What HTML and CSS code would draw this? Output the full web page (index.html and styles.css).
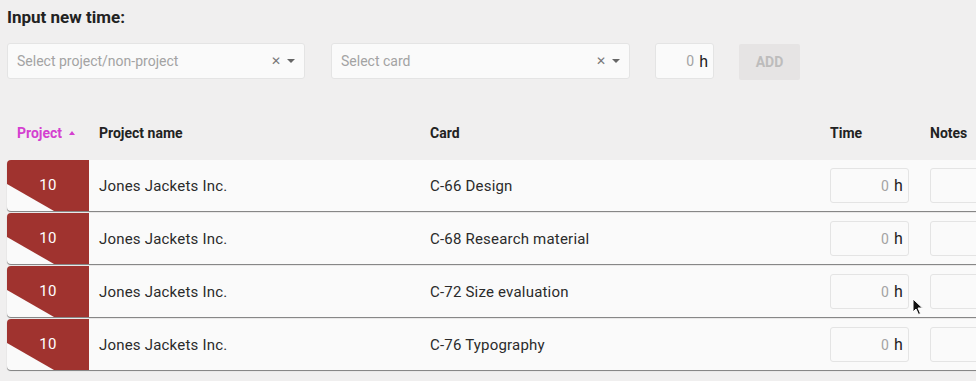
FILE: index.html
```html
<!DOCTYPE html>
<html lang="en">

<head>
  <meta charset="UTF-8">
  <title>Input new time</title>
  <link rel="stylesheet" href="styles.css">
</head>

<body>
  <div id="page">
    <h1>Input new time:</h1>

    <form class="new-time">
      <div class="select first">
        <span class="placeholder">Select project/non-project</span>
        <span class="clear">&#x2715;</span>
        <span class="caret"></span>
      </div>
      <div class="select second">
        <span class="placeholder">Select card</span>
        <span class="clear">&#x2715;</span>
        <span class="caret"></span>
      </div>
      <div class="hours">
        <span class="num">0</span><span class="unit">h</span>
      </div>
      <button type="button" disabled>ADD</button>
    </form>

    <div class="table">
      <div class="head">
        <div class="sorted">Project <span class="sort-up"></span></div>
        <div>Project name</div>
        <div>Card</div>
        <div>Time</div>
        <div>Notes</div>
      </div>

      <div class="row">
        <div class="badge">10</div>
        <div class="name">Jones Jackets Inc.</div>
        <div class="card">C-66 Design</div>
        <div class="time"><div class="hours small"><span class="num">0</span><span class="unit">h</span></div></div>
        <div class="notes"><div class="note-box"></div></div>
      </div>
      <div class="row">
        <div class="badge">10</div>
        <div class="name">Jones Jackets Inc.</div>
        <div class="card">C-68 Research material</div>
        <div class="time"><div class="hours small"><span class="num">0</span><span class="unit">h</span></div></div>
        <div class="notes"><div class="note-box"></div></div>
      </div>
      <div class="row">
        <div class="badge">10</div>
        <div class="name">Jones Jackets Inc.</div>
        <div class="card">C-72 Size evaluation</div>
        <div class="time"><div class="hours small"><span class="num">0</span><span class="unit">h</span></div></div>
        <div class="notes"><div class="note-box"></div></div>
      </div>
      <div class="row">
        <div class="badge">10</div>
        <div class="name">Jones Jackets Inc.</div>
        <div class="card">C-76 Typography</div>
        <div class="time"><div class="hours small"><span class="num">0</span><span class="unit">h</span></div></div>
        <div class="notes"><div class="note-box"></div></div>
      </div>
    </div>

    <svg class="cursor" width="12" height="18" viewBox="0 0 12 18">
      <path d="M1 1 L1 14 L4 11 L6.5 16.5 L8.5 15.5 L6 10 L10.5 10 Z" fill="#111" stroke="#fff" stroke-width="1"/>
    </svg>
  </div>
</body>

</html>
```

FILE: styles.css
```css
:root {
  --brick: #a0332f;
  --magenta: #d43fd0;
  --text: #2b2b2b;
  --muted: #a3a3a3;
  --field: #fafafa;
  --line: #e4e4e4;
}

* {
  box-sizing: border-box;
}

body {
  margin: 0;
  font-family: Roboto, 'Noto Sans', sans-serif;
  background-color: #f0efef;
  color: var(--text);
  overflow: hidden;
}

#page {
  position: relative;
  width: 976px;
  height: 381px;
  padding: 7px 0 0 7px;
}

h1 {
  margin: 0;
  font-size: 17px;
  line-height: 20px;
  font-weight: bold;
  color: #222;
}

.new-time {
  display: flex;
  align-items: flex-start;
  gap: 25px;
  margin-top: 16px;
}

.select {
  display: flex;
  align-items: center;
  height: 36px;
  padding: 0 9px 0 9px;
  background-color: var(--field);
  border: 1px solid var(--line);
  border-radius: 3px;
}

.select.first {
  width: 298px;
}

.select.second {
  width: 299px;
  margin-left: 1px;
}

.placeholder {
  flex: 1;
  font-size: 14px;
  color: var(--muted);
}

.clear {
  font-size: 12px;
  color: #777;
  margin-right: 6px;
}

.caret {
  width: 0;
  height: 0;
  border-left: 4px solid transparent;
  border-right: 4px solid transparent;
  border-top: 4px solid #666;
}

.hours {
  display: flex;
  align-items: center;
  justify-content: flex-end;
  width: 59px;
  height: 36px;
  padding-right: 5px;
  background-color: var(--field);
  border: 1px solid var(--line);
  border-radius: 3px;
}

.hours .num {
  font-size: 14px;
  color: var(--muted);
  margin-right: 5px;
}

.hours .unit {
  font-size: 16px;
  color: #222;
}

.hours.small {
  width: 79px;
  height: 35px;
}

button {
  width: 61px;
  height: 36px;
  margin-top: 1px;
  background-color: #e6e4e4;
  color: #bdbcbc;
  border: none;
  border-radius: 2px;
  font-family: inherit;
  font-size: 14px;
  font-weight: bold;
}

.table {
  margin-top: 39px;
  width: 1100px;
}

.head,
.row {
  display: grid;
  grid-template-columns: 82px 331px 400px 100px 1fr;
  align-items: center;
}

.head {
  height: 28px;
  font-size: 14px;
  font-weight: bold;
  color: #222;
  margin-bottom: 13px;
}

.head > div {
  padding-left: 10px;
}

.sorted {
  color: var(--magenta);
  display: flex;
  align-items: center;
}

.sort-up {
  width: 0;
  height: 0;
  margin-left: 7px;
  border-left: 3.5px solid transparent;
  border-right: 3.5px solid transparent;
  border-bottom: 4px solid var(--magenta);
}

.row {
  height: 51px;
  margin-bottom: 2px;
  background-color: var(--field);
  border-radius: 4px 0 0 4px;
  box-shadow: 0 1px 1px rgba(0, 0, 0, 0.3), 0 1px 0 #b9b9b9;
  font-size: 15px;
  letter-spacing: 0.2px;
}

.badge {
  height: 100%;
  display: flex;
  align-items: center;
  justify-content: center;
  padding-bottom: 2px;
  background-color: var(--brick);
  color: #fff;
  border-top-left-radius: 4px;
  clip-path: polygon(0 0, 100% 0, 100% 100%, 47px 100%, 0 24px);
}

.name,
.card,
.time,
.notes {
  padding-left: 10px;
}

.note-box {
  width: 100px;
  height: 35px;
  background-color: var(--field);
  border: 1px solid var(--line);
  border-radius: 3px;
}

.cursor {
  position: absolute;
  left: 912px;
  top: 298px;
}
```
